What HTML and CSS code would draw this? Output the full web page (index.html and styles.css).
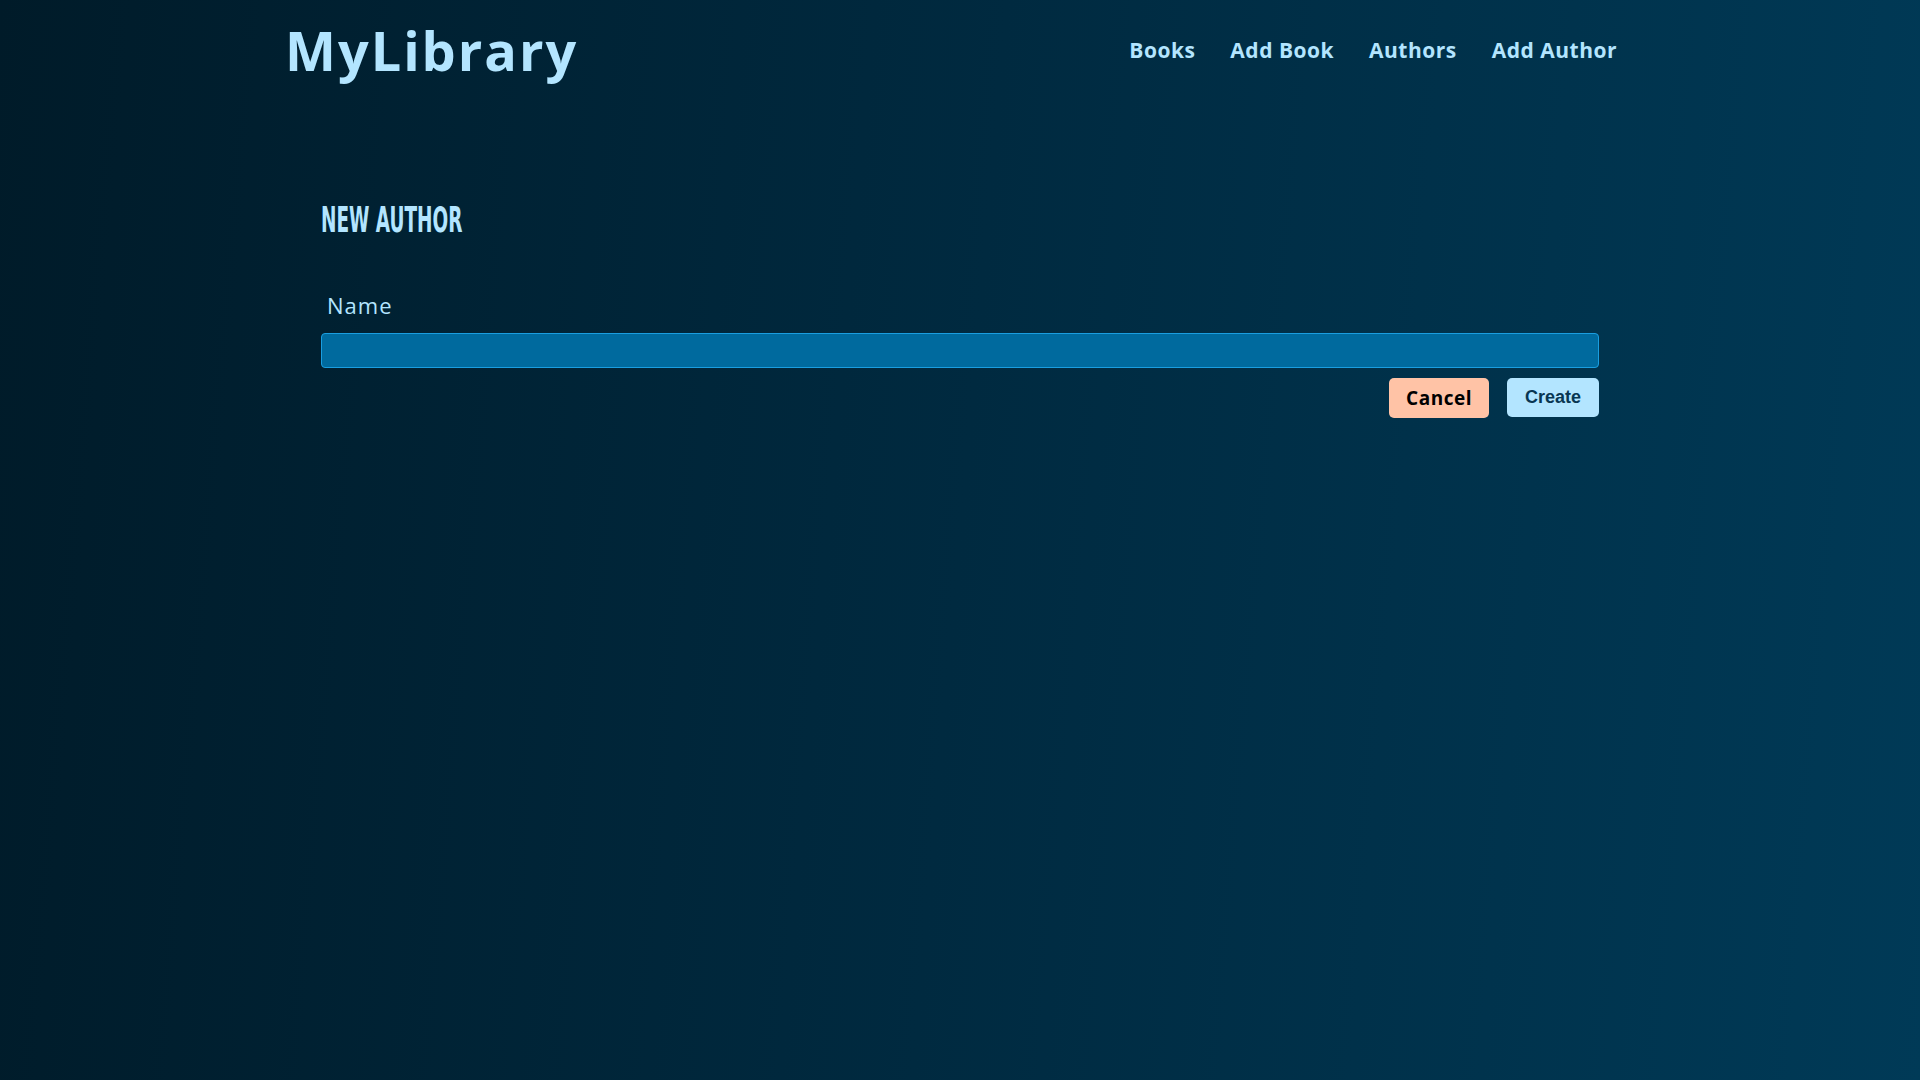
FILE: index.html
```html
<!DOCTYPE html>
<html lang="en">
<head>
<meta charset="utf-8">
<title>MyLibrary</title>
<link rel="stylesheet" href="styles.css">
</head>
<body>
<header class="site-header">
  <a class="logo" href="#">MyLibrary</a>
  <nav class="nav">
    <a class="nav-link" href="#">Books</a>
    <a class="nav-link" href="#">Add Book</a>
    <a class="nav-link" href="#">Authors</a>
    <a class="nav-link" href="#">Add Author</a>
  </nav>
</header>
<main class="page">
  <h2 class="page-title">New Author</h2>
  <form class="form">
    <label class="form-label" for="name">Name</label>
    <input class="form-input" id="name" type="text">
    <div class="form-actions">
      <a class="btn btn-cancel" href="#">Cancel</a>
      <button class="btn btn-create" type="submit">Create</button>
    </div>
  </form>
</main>
</body>
</html>
```
FILE: styles.css
```css
* { box-sizing: border-box; }
html, body { margin: 0; padding: 0; }
body {
  min-height: 100vh;
  background: linear-gradient(95deg, #001b29 0%, #002a40 50%, #003a57 100%);
  font-family: "Open Sans", "DejaVu Sans", sans-serif;
  color: #b3e5ff;
}
.site-header {
  width: 1350px;
  margin: 0 auto;
  padding: 0 18px 0 0;
  height: 100px;
  display: flex;
  align-items: flex-start;
  justify-content: space-between;
}
.logo {
  display: block;
  margin-top: 10px;
  font-size: 54px;
  font-weight: 700;
  line-height: 80px;
  letter-spacing: 2px;
  color: #b3e5ff;
  text-decoration: none;
}
.nav {
  display: flex;
  gap: 35px;
  margin-top: 35px;
}
.nav-link {
  font-size: 21px;
  font-weight: 700;
  line-height: 30px;
  letter-spacing: 0.5px;
  color: #b3e5ff;
  text-decoration: none;
}
.page {
  width: 1278px;
  margin: 0 auto;
}
.page-title {
  margin: 100px 0 0 0;
  font-family: "DejaVu Sans Condensed", "DejaVu Sans", sans-serif;
  font-stretch: condensed;
  font-weight: 700;
  font-size: 36px;
  line-height: 40px;
  text-transform: uppercase;
  color: #b3e5ff;
  display: inline-block;
  transform: scaleX(0.57);
  transform-origin: left center;
}
.form {
  margin-top: 50px;
  display: flex;
  flex-direction: column;
}
.form-label {
  padding-left: 6px;
  font-size: 22px;
  line-height: 30px;
  letter-spacing: 1px;
  color: #b3e5ff;
}
.form-input {
  margin-top: 13px;
  height: 35px;
  width: 100%;
  background: #006a9e;
  border: 1px solid #1a9ee0;
  border-radius: 4px;
  color: #fff;
  font-size: 18px;
}
.form-actions {
  margin-top: 10px;
  display: flex;
  justify-content: flex-end;
  gap: 18px;
}
.btn {
  display: inline-flex;
  align-items: center;
  justify-content: center;
  height: 40px;
  border: none;
  border-radius: 5px;
  text-decoration: none;
  cursor: pointer;
}
.btn-cancel {
  width: 100px;
  background: #ffc3a6;
  color: #000;
  font-family: "Open Sans", sans-serif;
  font-weight: 700;
  font-size: 19px;
  letter-spacing: 0.5px;
}
.btn-create {
  width: 92px;
  height: 39px;
  background: #b3e5ff;
  color: #083652;
  font-family: "Liberation Sans", Arial, sans-serif;
  font-weight: 700;
  font-size: 18px;
}
```
